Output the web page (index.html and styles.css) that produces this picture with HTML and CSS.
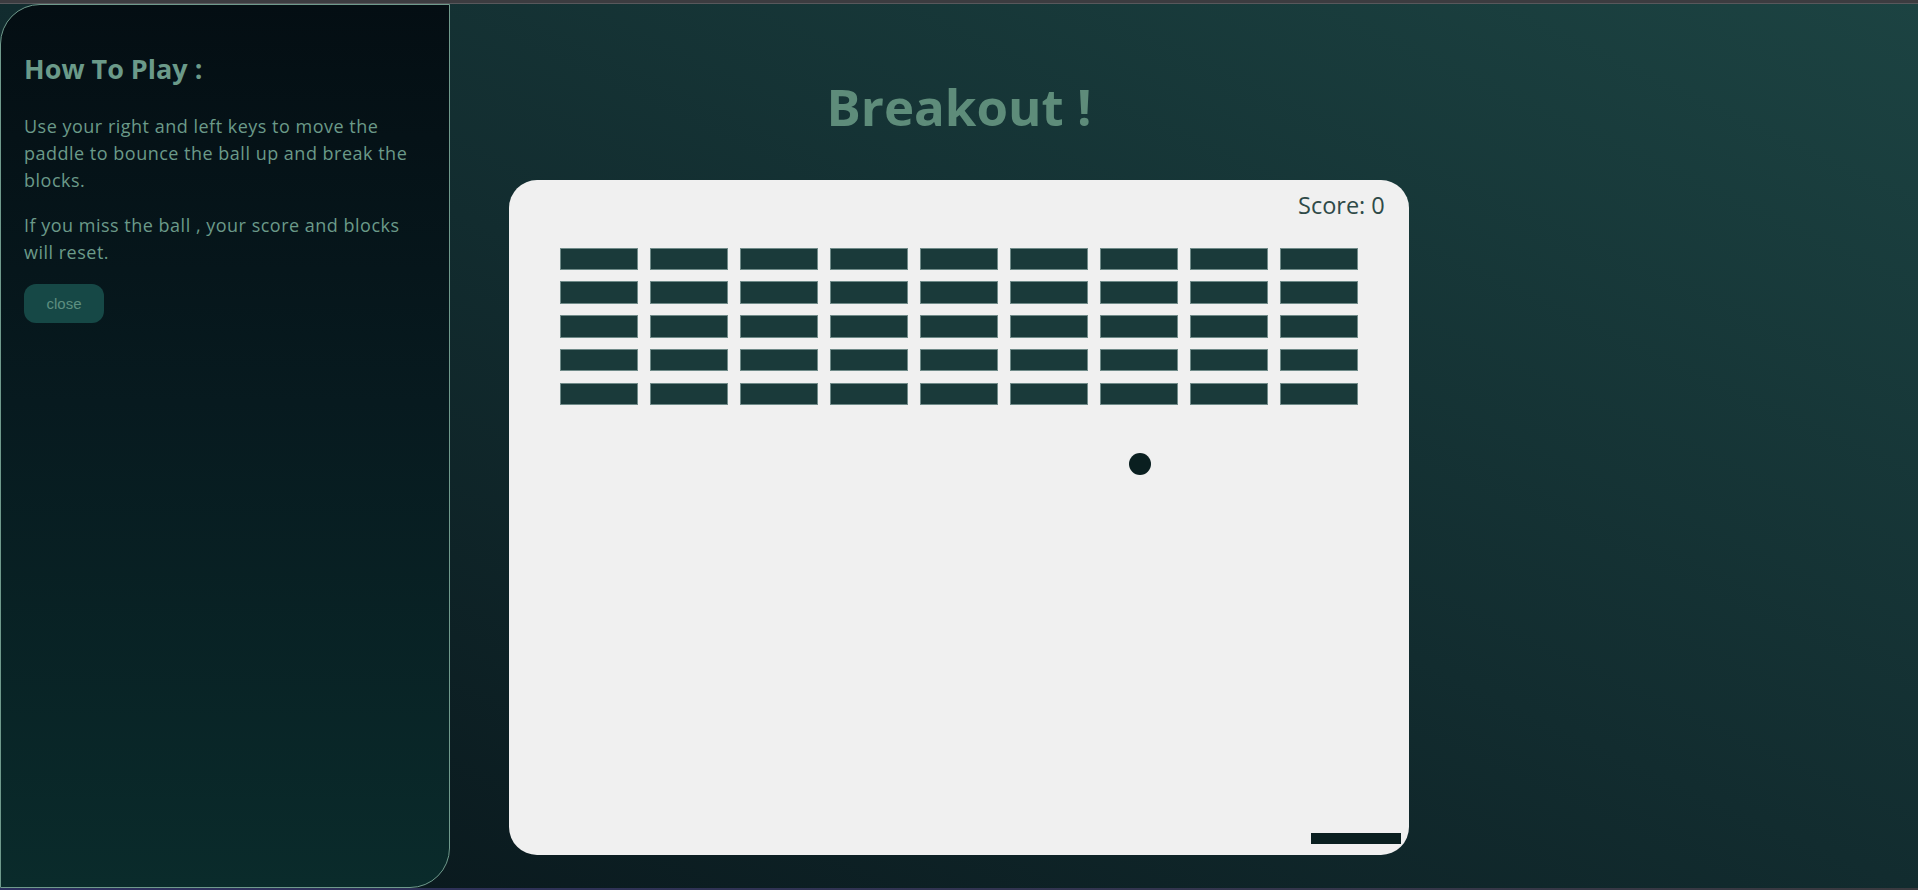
FILE: index.html
```html
<!DOCTYPE html>
<html lang="en">
<head>
<meta charset="UTF-8">
<title>Breakout!</title>
<link rel="stylesheet" href="styles.css">
</head>
<body>
<div class="topbar"></div>
<main class="main">
  <h1 class="title">Breakout !</h1>
  <div class="board">
    <div class="score">Score: 0</div>
    <div class="bricks">
      <div class="brick"></div><div class="brick"></div><div class="brick"></div><div class="brick"></div><div class="brick"></div><div class="brick"></div><div class="brick"></div><div class="brick"></div><div class="brick"></div>
      <div class="brick"></div><div class="brick"></div><div class="brick"></div><div class="brick"></div><div class="brick"></div><div class="brick"></div><div class="brick"></div><div class="brick"></div><div class="brick"></div>
      <div class="brick"></div><div class="brick"></div><div class="brick"></div><div class="brick"></div><div class="brick"></div><div class="brick"></div><div class="brick"></div><div class="brick"></div><div class="brick"></div>
      <div class="brick"></div><div class="brick"></div><div class="brick"></div><div class="brick"></div><div class="brick"></div><div class="brick"></div><div class="brick"></div><div class="brick"></div><div class="brick"></div>
      <div class="brick"></div><div class="brick"></div><div class="brick"></div><div class="brick"></div><div class="brick"></div><div class="brick"></div><div class="brick"></div><div class="brick"></div><div class="brick"></div>
    </div>
    <div class="ball"></div>
    <div class="paddle"></div>
  </div>
</main>
<div class="bottombar"></div>
<aside class="rules">
  <h2 class="rules-title">How To Play :</h2>
  <p class="rules-text">Use your right and left keys to move the paddle to bounce the ball up and break the blocks.</p>
  <p class="rules-text">If you miss the ball , your score and blocks will reset.</p>
  <button class="close-btn">close</button>
</aside>
</body>
</html>
```
FILE: styles.css
```css
* { box-sizing: border-box; }
html, body { margin: 0; padding: 0; }
body {
  height: 890px;
  overflow: hidden;
  display: flex;
  flex-direction: column;
  font-family: "Open Sans", "DejaVu Sans", sans-serif;
  background: linear-gradient(to top right, #08151a 0%, #122c2f 50%, #1c4342 100%);
  position: relative;
}
.topbar {
  height: 4px;
  background: #3c3c40;
  border-bottom: 1px solid #58585c;
  flex: none;
}
.bottombar {
  height: 2px;
  flex: none;
  background: linear-gradient(to right, #2b2f5e, #33354f 60%, #3a3a3f);
}
.main {
  flex: 1;
  display: flex;
  flex-direction: column;
  align-items: center;
}
.title {
  margin: 68px 0 39px;
  font-size: 51px;
  font-weight: 700;
  color: #5e8c7a;
  line-height: 69px;
}
.board {
  position: relative;
  width: 900px;
  height: 675px;
  background: #f0f0f0;
  border-radius: 28px;
  padding: 67.5px 0 0 50.6px;
}
.score {
  position: absolute;
  left: 789px;
  top: 14px;
  font-size: 23.5px;
  line-height: 1;
  color: #2f4a48;
}
.bricks {
  display: grid;
  grid-template-columns: repeat(9, 78.75px);
  grid-auto-rows: 22.5px;
  column-gap: 11.25px;
  row-gap: 11.25px;
}
.brick {
  background: #1a3a3a;
  border: 1px solid #6f8a88;
}
.ball {
  position: absolute;
  left: 619.5px;
  top: 272.5px;
  width: 22.5px;
  height: 22.5px;
  border-radius: 50%;
  background: #0a1f20;
}
.paddle {
  position: absolute;
  left: 801.5px;
  top: 652.5px;
  width: 90px;
  height: 11.25px;
  background: #0a1f20;
}
.rules {
  position: absolute;
  left: 0;
  top: 4px;
  bottom: 2px;
  width: 450px;
  border: 1px solid #6f9a8c;
  border-radius: 40px 0 40px 0;
  background: linear-gradient(to bottom, #040e13 0%, #071a1f 45%, #0a2b2b 100%);
  padding: 20px 23px;
  color: #6b9a89;
}
.rules-title {
  margin: 25px 0 26px;
  font-size: 27px;
  font-weight: 700;
  line-height: normal;
}
.rules-text {
  margin: 18px 0;
  font-size: 18px;
  line-height: 27px;
  letter-spacing: 0.5px;
}
.close-btn {
  display: block;
  width: 80px;
  height: 39px;
  border: none;
  border-radius: 12px;
  background: #164846;
  color: #5d8f80;
  font-family: "Liberation Sans", Arial, sans-serif;
  font-size: 15px;
  padding: 0;
  margin-top: 18px;
}
```
